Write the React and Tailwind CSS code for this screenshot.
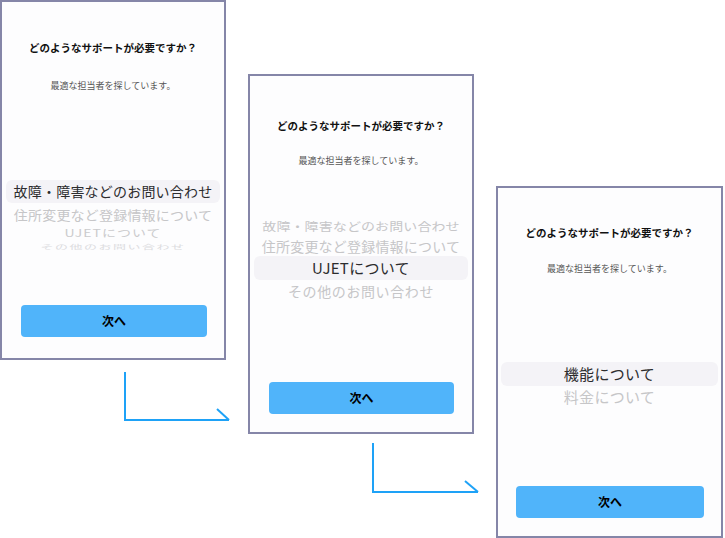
import React from "react";

const jp = { fontFamily: '"Noto Sans CJK JP", "Noto Sans", sans-serif' };

function Header({ top, gap }) {
  return (
    <>
      <p className={`text-center text-[10.5px] leading-[14px] font-bold text-[#111] ${top}`}>
        どのようなサポートが必要ですか？
      </p>
      <p className={`text-center text-[9px] leading-[12px] text-[#555] ${gap}`}>
        最適な担当者を探しています。
      </p>
    </>
  );
}

function NextButton({ className }) {
  return (
    <button className={`h-[32px] rounded-[4px] bg-[#50b4fa] text-[12px] font-bold text-black ${className}`}>
      次へ
    </button>
  );
}

export default function App() {
  return (
    <div className="relative w-[725px] h-[538px] overflow-hidden bg-white" style={jp}>
      {/* step 1 */}
      <div className="absolute left-0 top-0 w-[226px] h-[360px] border-2 border-[#8586a8] bg-[#fdfdfe] flex flex-col">
        <Header top="mt-[39px]" gap="mt-[25px]" />
        <div className="mt-[88px] flex flex-col items-center">
          <div className="self-stretch mx-[4px] h-[23px] rounded-[6px] bg-[#f4f3f7] flex items-center justify-center text-[14px] tracking-[0.2px] text-[#2c2c2e]">
            故障・障害などのお問い合わせ
          </div>
          <div className="h-[22px] flex items-center justify-center text-[14px] tracking-[0.2px] text-[#c6c6c8] scale-y-[0.92]">
            住所変更など登録情報について
          </div>
          <div className="h-[16px] flex items-center justify-center text-[14px] tracking-[1px] text-[#cbcbcd] scale-y-[0.72]">
            UJETについて
          </div>
          <div className="h-[12px] flex items-center justify-center text-[13px] leading-[12px] tracking-[1.5px] text-[#dcdcde] scale-y-[0.45]">
            その他のお問い合わせ
          </div>
        </div>
        <NextButton className="mt-auto mb-[21px] ml-[19px] mr-[17px]" />
      </div>

      {/* step 2 */}
      <div className="absolute left-[248px] top-[74px] w-[226px] h-[360px] border-2 border-[#8586a8] bg-[#fdfdfe] flex flex-col">
        <Header top="mt-[43px]" gap="mt-[22px]" />
        <div className="mt-[49px] flex flex-col items-center">
          <div className="h-[20px] flex items-center justify-center text-[14px] tracking-[0.1px] text-[#c6c6c8] scale-y-[0.85]">
            故障・障害などのお問い合わせ
          </div>
          <div className="h-[20px] flex items-center justify-center text-[14px] tracking-[0.2px] text-[#c6c6c8] scale-y-[0.95]">
            住所変更など登録情報について
          </div>
          <div className="self-stretch mx-[4px] h-[24px] rounded-[6px] bg-[#f4f3f7] flex items-center justify-center text-[15px] tracking-[0.3px] text-[#2c2c2e]">
            UJETについて
          </div>
          <div className="h-[22px] flex items-center justify-center text-[14px] tracking-[0.6px] text-[#c6c6c8]">
            その他のお問い合わせ
          </div>
        </div>
        <NextButton className="mt-auto mb-[18px] ml-[19px] mr-[18px]" />
      </div>

      {/* step 3 */}
      <div className="absolute left-[496px] top-[186px] w-[227px] h-[352px] border-2 border-[#8586a8] bg-[#fdfdfe] flex flex-col">
        <Header top="mt-[38px]" gap="mt-[23px]" />
        <div className="mt-[87px] flex flex-col items-center">
          <div className="self-stretch mx-[3px] h-[24px] rounded-[6px] bg-[#f4f3f7] flex items-center justify-center text-[15px] tracking-[0.3px] text-[#2c2c2e]">
            機能について
          </div>
          <div className="h-[22px] flex items-center justify-center text-[15px] tracking-[0.3px] text-[#c6c6c8]">
            料金について
          </div>
        </div>
        <NextButton className="mt-auto mb-[18px] ml-[18px] mr-[17px]" />
      </div>

      {/* flow arrows */}
      <svg className="absolute inset-0 pointer-events-none" width="725" height="538" viewBox="0 0 725 538" fill="none">
        <g stroke="#1ea2f7" strokeWidth="2">
          <path d="M125 372V420H229" />
          <path d="M217 409L229 420" />
          <path d="M373 443V492H478" />
          <path d="M465 481L478 492" />
        </g>
      </svg>
    </div>
  );
}
